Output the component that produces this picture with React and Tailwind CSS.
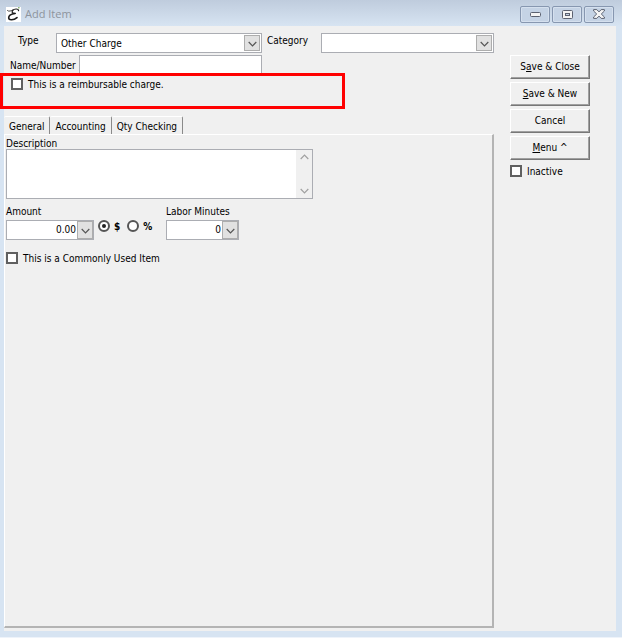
import React from "react";

function Chevron({ up = false, color = "#555555" }) {
  return (
    <svg width="9" height="6" viewBox="0 0 9 6" fill="none" stroke={color} strokeWidth="1.2" aria-hidden="true">
      <path d={up ? "M.7 5 4.5 1.2 8.3 5" : "M.7 1 4.5 4.8 8.3 1"} />
    </svg>
  );
}

function Dropdown({ id, options, className }) {
  return (
    <div className={`relative h-5 ${className}`}>
      <select
        id={id}
        className="block h-full w-full appearance-none rounded-none border border-[#abadb3] bg-white pl-1 pr-5 outline-none"
      >
        {options.map((o) => (
          <option key={o}>{o}</option>
        ))}
      </select>
      <span className="pointer-events-none absolute inset-y-0.5 right-0.5 flex w-4 items-center justify-center border border-[#adadad] bg-[#e1e1e1] pt-0.5">
        <Chevron />
      </span>
    </div>
  );
}

function NumberField({ id, label, value, className }) {
  return (
    <div className={className}>
      <label htmlFor={id} className="block h-4 leading-4">
        {label}
      </label>
      <div className="flex h-5 border border-[#abadb3] bg-white">
        <input id={id} defaultValue={value} className="min-w-0 flex-1 pr-px pb-0.5 text-right outline-none" />
        <button
          type="button"
          aria-label={`${label} options`}
          className="flex w-4 items-center justify-center border border-[#adadad] bg-[#e1e1e1] pt-0.5"
        >
          <Chevron />
        </button>
      </div>
    </div>
  );
}

function CheckBox({ id, label, className = "" }) {
  return (
    <div className={`flex h-4 items-center gap-[5px] ${className}`}>
      <input
        id={id}
        type="checkbox"
        className="size-3 shrink-0 appearance-none border-2 border-[#606060] bg-white checked:bg-[#606060]"
      />
      <label htmlFor={id} className="whitespace-nowrap">
        {label}
      </label>
    </div>
  );
}

function Radio({ id, label, checked }) {
  return (
    <div className="flex h-4 items-center gap-1">
      <span className="grid size-3 place-items-center">
        <input
          id={id}
          type="radio"
          name="unit"
          defaultChecked={checked}
          className="peer col-start-1 row-start-1 size-3 appearance-none rounded-full border-2 border-[#555555] bg-white"
        />
        <span className="pointer-events-none col-start-1 row-start-1 hidden size-1 rounded-full bg-[#222222] peer-checked:block" />
      </span>
      <label htmlFor={id} className="font-semibold">
        {label}
      </label>
    </div>
  );
}

function WindowButton({ label, children }) {
  return (
    <button
      type="button"
      aria-label={label}
      className="flex h-[17px] w-[30px] items-center justify-center rounded-xs border border-[#8797b0] bg-[#c5d3e5] shadow-[inset_0_0_0_1px_#d5e0ee]"
    >
      {children}
    </button>
  );
}

function PushButton({ children }) {
  return (
    <button
      type="button"
      className="h-6 border border-t-white border-l-white border-r-[#777777] border-b-[#777777] bg-[#f0f0f0] text-center leading-4 shadow-[inset_-1px_-1px_0_#a0a0a0]"
    >
      {children}
    </button>
  );
}

function Tab({ active = false, children }) {
  return (
    <button
      type="button"
      role="tab"
      aria-selected={active}
      className={
        active
          ? "-mb-px h-[19px] rounded-t-xs border-t border-r border-t-white border-r-[#8a8a8a] bg-[#f0f0f0] px-[5px] pt-px"
          : "h-[18px] rounded-t-xs border-t border-r border-t-white border-r-[#8a8a8a] bg-[#f0f0f0] px-[5px] pt-0.5"
      }
    >
      {children}
    </button>
  );
}

export default function App() {
  return (
    <div className="flex min-h-screen flex-col border-b border-[#eef3fa] bg-[#d7e4f2] font-['Tahoma','DejaVu_Sans_Condensed','DejaVu_Sans',sans-serif] text-[10px] text-black">
      <header className="flex h-[26px] items-center justify-between bg-linear-to-b from-[#bfccdd] to-[#d7e4f2] pt-0.5 pr-2 pl-1.5">
        <div className="flex items-center gap-1">
          <svg width="15" height="15" viewBox="0 0 15 15" aria-hidden="true">
            <rect width="15" height="15" fill="#fff" />
            <g fill="none" stroke="#1a1a1a" strokeLinecap="round">
              <path d="M1.500 3.600C3 5 5 3.800 7 2.800" strokeWidth=".8" />
              <path d="M12.600 3.600C12.400 1.400 8.200 1.600 6.600 3.600c-1.200 1.800-.2 3 2.600 2.800" strokeWidth="1.200" />
              <path d="M9 6.500C5.400 7 2.600 8.800 2.700 11c.2 2.600 5 2.200 8.300-.4" strokeWidth="1.600" />
            </g>
            <path d="M12 .8h1.600" stroke="#5f9a3c" />
          </svg>
          <h1 className="font-['Segoe_UI','Open_Sans',sans-serif] text-[11px] leading-4 text-[#8d949d]">Add Item</h1>
        </div>
        <div className="flex gap-0.5">
          <WindowButton label="Minimize">
            <svg width="11" height="5" viewBox="0 0 11 5">
              <rect x=".5" y=".5" width="10" height="4" rx="1" fill="#f4f4f4" stroke="#5b6170" />
            </svg>
          </WindowButton>
          <WindowButton label="Maximize">
            <svg width="11" height="9" viewBox="0 0 11 9">
              <rect x=".5" y=".5" width="10" height="8" rx="1" fill="#f4f4f4" stroke="#5b6170" />
              <rect x="3.500" y="3.500" width="4" height="2" fill="#c5d3e5" stroke="#5b6170" />
            </svg>
          </WindowButton>
          <WindowButton label="Close">
            <svg width="12" height="10" viewBox="0 0 12 10">
              <path
                d="M.6.600h3.200L6 2.900 8.200.600h3.200v1.400L8.300 5l3.100 3v1.400H8.200L6 7.100 3.800 9.400H.6V8l3.100-3L.6 2z"
                fill="#f4f4f4"
                stroke="#5b6170"
                strokeLinejoin="round"
              />
            </svg>
          </WindowButton>
        </div>
      </header>

      <main className="mr-1.5 mb-1.5 ml-1 flex flex-1 bg-[#f0f0f0]">
        <section className="flex min-w-0 flex-1 flex-col pb-[3px]">
          <div className="flex pt-[7px]">
            <label htmlFor="type" className="w-[52px] pl-3.5 leading-4">
              Type
            </label>
            <Dropdown id="type" options={["Other Charge"]} className="w-[206px]" />
            <label htmlFor="category" className="w-[59px] pl-[5px] leading-4">
              Category
            </label>
            <Dropdown id="category" options={[""]} className="min-w-0 flex-1" />
          </div>
          <div className="mt-0.5 flex h-[18px]">
            <label htmlFor="name" className="w-[75px] pl-1.5 leading-[22px] whitespace-nowrap">
              Name/Number
            </label>
            <input
              id="name"
              className="w-[183px] border border-b-0 border-[#abadb3] bg-white px-1 outline-none"
            />
          </div>
          <div className="-ml-1 h-9 w-[345px] border-3 border-[#ff0000] pl-2">
            <CheckBox id="reimbursable" label="This is a reimbursable charge." />
          </div>

          <div role="tablist" className="mt-[7px] flex h-[18px] items-start">
            <Tab active>General</Tab>
            <Tab>Accounting</Tab>
            <Tab>Qty Checking</Tab>
          </div>
          <div
            role="tabpanel"
            className="flex-1 border-t border-r-2 border-b-2 border-l border-t-white border-r-[#b4b4b4] border-b-[#b4b4b4] border-l-white px-px"
          >
            <label htmlFor="description" className="block h-[14px] leading-[18px]">
              Description
            </label>
            <div className="flex h-[50px] w-[307px] border border-[#abadb3] bg-white">
              <textarea id="description" className="min-w-0 flex-1 resize-none overflow-hidden px-1 outline-none" />
              <div className="flex w-4 flex-col items-center justify-between bg-[#f0f0f0] py-1">
                <button type="button" aria-label="Scroll up">
                  <Chevron up color="#a0a0a0" />
                </button>
                <button type="button" aria-label="Scroll down">
                  <Chevron color="#a0a0a0" />
                </button>
              </div>
            </div>
            <div className="mt-[5px] flex">
              <NumberField id="amount" label="Amount" value="0.00" className="w-[88px]" />
              <div className="flex w-[72px] gap-[7px] pt-3.5 pl-1">
                <Radio id="dollar" label="$" checked />
                <Radio id="percent" label="%" />
              </div>
              <NumberField id="labor" label="Labor Minutes" value="0" className="w-[73px] whitespace-nowrap" />
            </div>
            <CheckBox id="common" label="This is a Commonly Used Item" className="mt-2.5" />
          </div>
        </section>

        <aside className="mt-[29px] mr-[26px] ml-4 flex w-20 flex-col gap-[3px]">
          <PushButton>
            S<u>a</u>ve &amp; Close
          </PushButton>
          <PushButton>
            <u>S</u>ave &amp; New
          </PushButton>
          <PushButton>Cancel</PushButton>
          <PushButton>
            <u>M</u>enu ^
          </PushButton>
          <CheckBox id="inactive" label="Inactive" />
        </aside>
      </main>
    </div>
  );
}
